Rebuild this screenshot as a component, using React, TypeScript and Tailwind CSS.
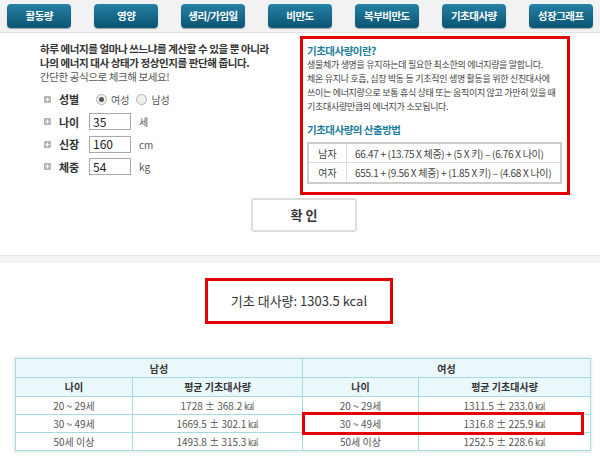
import type React from "react";

const NAV_ITEMS = [
  "활동량",
  "영양",
  "생리/가임일",
  "비만도",
  "복부비만도",
  "기초대사량",
  "성장그래프",
];

const TABLE_ROWS = [
  { age: "20 ~ 29세", male: "1728 ± 368.2 ㎉", female: "1311.5 ± 233.0 ㎉" },
  { age: "30 ~ 49세", male: "1669.5 ± 302.1 ㎉", female: "1316.8 ± 225.9 ㎉" },
  { age: "50세 이상", male: "1493.8 ± 315.3 ㎉", female: "1252.5 ± 228.6 ㎉" },
];

const Bullet: React.FC = () => (
  <svg width="7" height="7" viewBox="0 0 7 7" className="shrink-0">
    <rect width="7" height="7" rx="1" fill="#b4b4b4" />
    <path d="M3.5 1.5v4M1.5 3.5h4" stroke="#fff" strokeWidth="1" />
  </svg>
);

const Radio: React.FC<{ checked?: boolean }> = ({ checked }) => (
  <span className="flex h-[11px] w-[11px] items-center justify-center rounded-full border border-[#b5b5b5] bg-[#eeeeee]">
    {checked && <span className="h-[5px] w-[5px] rounded-full bg-[#555]" />}
  </span>
);

const FieldRow: React.FC<{ label: string; children: React.ReactNode }> = ({
  label,
  children,
}) => (
  <div className="flex h-[22.5px] items-center">
    <span className="ml-[4px] mr-[8px]">
      <Bullet />
    </span>
    <span className="w-[30px] text-[11px] font-bold text-[#333]">{label}</span>
    {children}
  </div>
);

const NumberField: React.FC<{ value: string; unit: string }> = ({
  value,
  unit,
}) => (
  <>
    <input
      readOnly
      value={value}
      className="h-[17px] w-[42px] border border-[#a9a9a9] bg-white px-[3px] text-[12px] text-[#222] outline-none"
    />
    <span className="ml-[8px] text-[10px] text-[#555]">{unit}</span>
  </>
);

export default function App() {
  return (
    <div className="h-[462px] w-[600px] overflow-hidden bg-white font-['Noto_Sans_CJK_KR','Noto_Sans',sans-serif] text-[#333]">
      {/* top menu */}
      <div className="flex h-[33px] items-center gap-[22.5px] border-b border-[#e0e0e0] bg-[#f2f2f2] px-[7px]">
        {NAV_ITEMS.map((item) => (
          <div
            key={item}
            className="flex h-[24px] w-[65px] items-center justify-center rounded-[4px] bg-linear-to-b from-[#2681a4] to-[#0a5473] text-[10.5px] font-bold tracking-[-0.5px] text-white shadow-[0_1px_1px_rgba(0,0,0,0.35)]"
          >
            {item}
          </div>
        ))}
      </div>

      <div className="flex h-[162px]">
        {/* left: form */}
        <div className="w-[300px] pl-[40px] pt-[9px]">
          <p className="text-[10.5px] font-bold leading-[14px] tracking-[-0.4px] text-[#333]">
            하루 에너지를 얼마나 쓰느냐를 계산할 수 있을 뿐 아니라
            <br />
            나의 에너지 대사 상태가 정상인지를 판단해 줍니다.
          </p>
          <p className="text-[10.5px] leading-[14px] tracking-[-0.4px] text-[#555]">
            간단한 공식으로 체크해 보세요!
          </p>
          <div className="mt-[4px] flex flex-col">
            <FieldRow label="성별">
              <span className="ml-[7px] flex items-center gap-[4px] text-[10px] text-[#555]">
                <Radio checked />
                여성
                <span className="ml-[3px]">
                  <Radio />
                </span>
                남성
              </span>
            </FieldRow>
            <FieldRow label="나이">
              <NumberField value="35" unit="세" />
            </FieldRow>
            <FieldRow label="신장">
              <NumberField value="160" unit="cm" />
            </FieldRow>
            <FieldRow label="체중">
              <NumberField value="54" unit="kg" />
            </FieldRow>
          </div>
        </div>

        {/* right: info box */}
        <div className="mt-[3px] h-[159px] w-[270px] border-[3px] border-[#e30000] px-[4px] pt-[4px]">
          <h3 className="text-[10.5px] font-bold leading-[15px] tracking-[-0.5px] text-[#1b7f9c]">
            기초대사량이란?
          </h3>
          <p className="text-[9px] leading-[14px] tracking-[-0.3px] text-[#444]">
            생물체가 생명을 유지하는데 필요한 최소한의 에너지량을 말합니다.
            <br />
            체온 유지나 호흡, 심장 박동 등 기초적인 생명 활동을 위한 신진대사에
            <br />
            쓰이는 에너지량으로 보통 휴식 상태 또는 움직이지 않고 가만히 있을 때
            <br />
            기초대사량만큼의 에너지가 소모됩니다.
          </p>
          <h3 className="mt-[8px] text-[10.5px] font-bold leading-[15px] tracking-[-0.5px] text-[#1b7f9c]">
            기초대사량의 산출방법
          </h3>
          <div className="mt-[5px] w-[255px] border-2 border-[#cccccc] text-[10px] text-[#444]">
            <div className="flex h-[19px] items-center border-b border-[#dddddd]">
              <span className="flex h-full w-[38px] items-center justify-center border-r border-[#dddddd]">
                남자
              </span>
              <span className="pl-[8px] tracking-[-0.3px]">
                66.47 + (13.75 X 체중) + (5 X 키) – (6.76 X 나이)
              </span>
            </div>
            <div className="flex h-[19px] items-center">
              <span className="flex h-full w-[38px] items-center justify-center border-r border-[#dddddd]">
                여자
              </span>
              <span className="pl-[8px] tracking-[-0.3px]">
                655.1 + (9.56 X 체중) + (1.85 X 키) – (4.68 X 나이)
              </span>
            </div>
          </div>
        </div>
      </div>

      {/* confirm */}
      <div className="mt-[3px] flex pl-[251px]">
        <button className="flex h-[34px] w-[106px] items-center justify-center rounded-[3px] border-2 border-[#dedede] bg-white text-[13px] font-bold text-[#333]">
          확 인
        </button>
      </div>

      {/* separator */}
      <div className="mt-[23px] h-[8px] border-t border-[#e3e3e3] bg-[#f4f4f4]" />

      {/* result */}
      <div className="mt-[15px] flex pl-[205px]">
        <div className="flex h-[46px] w-[188px] items-center justify-center border-[3px] border-[#e30000] text-[13px] text-[#333]">
          기초 대사량: 1303.5 kcal
        </div>
      </div>

      {/* average table */}
      <div className="relative ml-[15px] mt-[34px] w-[575px] shadow-[0_0_2px_2px_#eeeeee]">
        <table className="w-full table-fixed border-collapse text-center text-[10px] text-[#555]">
          <colgroup>
            <col className="w-[117px]" />
            <col className="w-[170px]" />
            <col className="w-[116px]" />
            <col className="w-[172px]" />
          </colgroup>
          <thead>
            <tr className="h-[19px] bg-[#eaf7fb] font-bold text-[#333]">
              <th colSpan={2} className="border border-[#a7d9e5]">
                남성
              </th>
              <th colSpan={2} className="border border-[#a7d9e5]">
                여성
              </th>
            </tr>
            <tr className="h-[18.5px] bg-[#eaf7fb] font-bold text-[#333]">
              <th className="border border-[#a7d9e5]">나이</th>
              <th className="border border-[#a7d9e5]">평균 기초대사량</th>
              <th className="border border-[#a7d9e5]">나이</th>
              <th className="border border-[#a7d9e5]">평균 기초대사량</th>
            </tr>
          </thead>
          <tbody>
            {TABLE_ROWS.map((row) => (
              <tr key={row.age} className="h-[18.3px]">
                <td className="border border-[#a7d9e5]">{row.age}</td>
                <td className="border border-[#a7d9e5]">{row.male}</td>
                <td className="border border-[#a7d9e5]">{row.age}</td>
                <td className="border border-[#a7d9e5]">{row.female}</td>
              </tr>
            ))}
          </tbody>
        </table>
        {/* highlight for 30~49 female */}
        <div className="absolute left-[287px] top-[54px] h-[23px] w-[282px] border-[3px] border-[#e30000]" />
      </div>
    </div>
  );
}
